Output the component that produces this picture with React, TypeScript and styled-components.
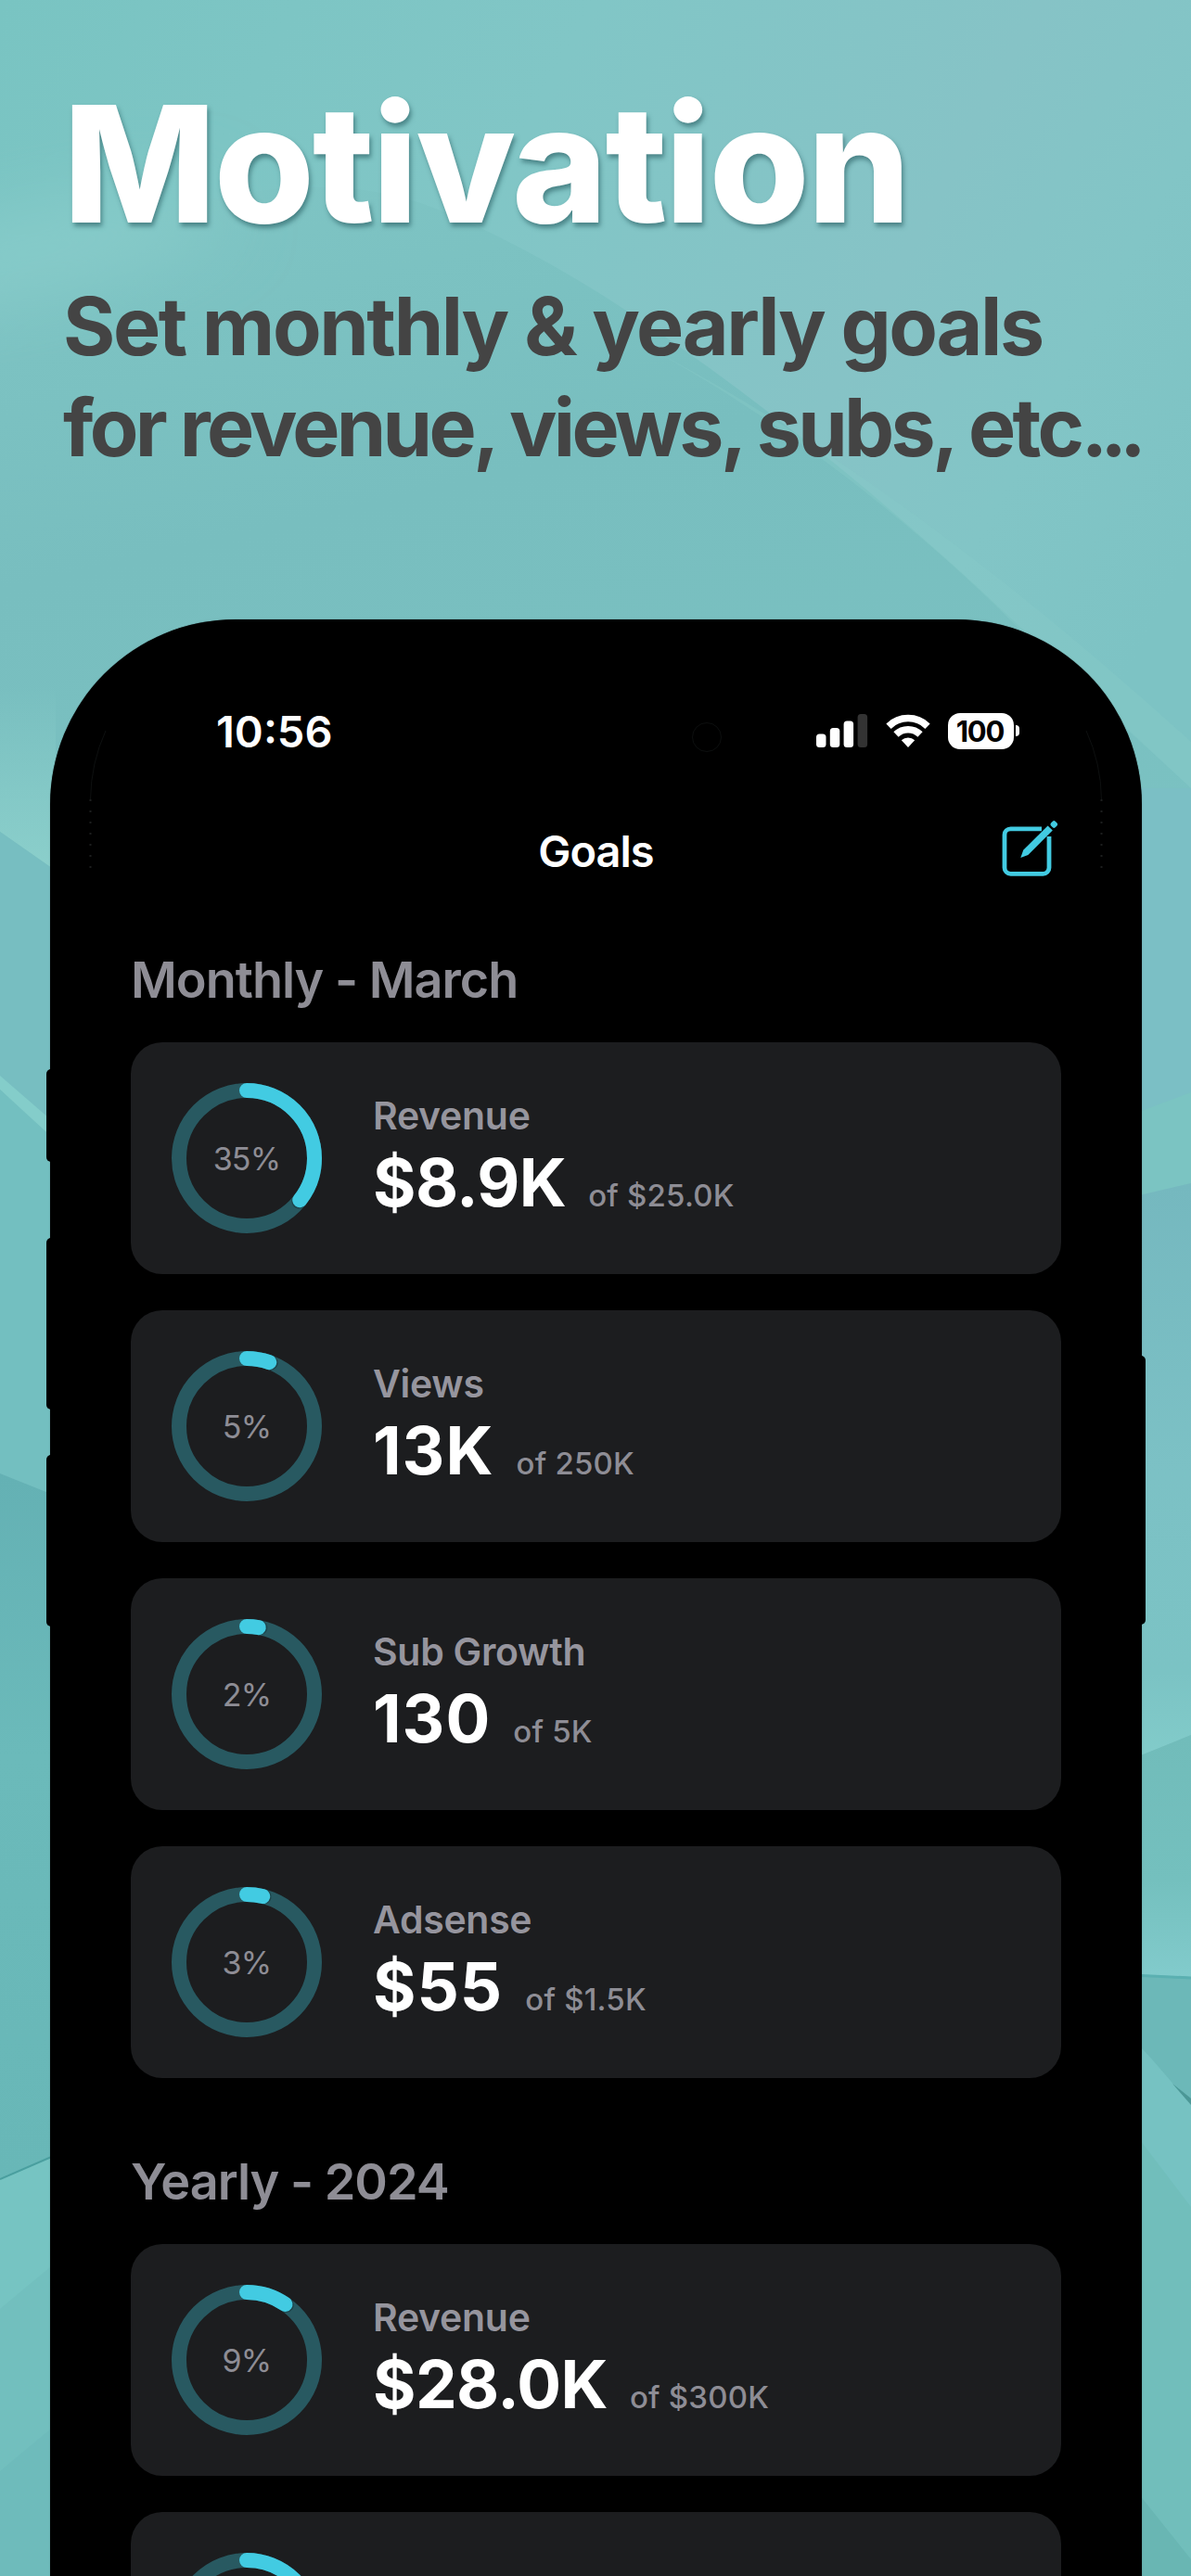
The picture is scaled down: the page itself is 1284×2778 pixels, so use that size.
import * as React from 'react'
import styled, { createGlobalStyle } from 'styled-components'

const accent = '#42cbe2'
const muted = '#8e8d95'

type Goal = {
  label: string
  value: string
  target: string
  percent: string
  ratio: number
}

const monthlyGoals: Goal[] = [
  { label: 'Revenue', value: '$8.9K', target: '$25.0K', percent: '35%', ratio: 0.356 },
  { label: 'Views', value: '13K', target: '250K', percent: '5%', ratio: 0.054 },
  { label: 'Sub Growth', value: '130', target: '5K', percent: '2%', ratio: 0.028 },
  { label: 'Adsense', value: '$55', target: '$1.5K', percent: '3%', ratio: 0.038 },
]

const yearlyGoals: Goal[] = [
  { label: 'Revenue', value: '$28.0K', target: '$300K', percent: '9%', ratio: 0.096 },
  { label: 'Views', value: '', target: '', percent: '', ratio: 0.3 },
]

const GlobalStyle = createGlobalStyle`
  body {
    margin: 0;
    font-family: Inter, 'Liberation Sans', sans-serif;
    -webkit-font-smoothing: antialiased;
  }
`

const Poster = styled.main`
  position: relative;
  display: flex;
  flex-direction: column;
  width: 1284px;
  height: 2778px;
  overflow: hidden;
  background: #7bc1c2;
`

const Backdrop = styled.svg`
  position: absolute;
  inset: 0;
`

const Hero = styled.header`
  position: relative;
  box-sizing: border-box;
  flex: none;
  height: 668px;
  padding: 70px 0 0 68px;
  white-space: nowrap;
`

const Title = styled.h1`
  margin: 0;
  color: #fff;
  font-size: 175px;
  font-weight: 800;
  line-height: 212px;
  letter-spacing: -2.3px;
  text-shadow: 2px 4px 5px rgba(30, 80, 85, 0.55);
`

const Subtitle = styled.p`
  margin: 16px 0 0;
  color: #444;
  font-size: 86px;
  font-weight: 700;
  line-height: 109px;
`

const SubtitleLine = styled.span<{ spacing: number }>`
  display: block;
  letter-spacing: ${({ spacing }) => spacing}px;
`

const Dots = styled.span`
  letter-spacing: -8px;
`

const Phone = styled.section`
  position: relative;
  box-sizing: border-box;
  width: 1177px;
  height: 2400px;
  flex: none;
  margin-left: 54px;
  padding: 0 87px;
  border-radius: 200px 200px 0 0;
  background: #000;
  box-shadow: 0 0 1px rgba(0, 0, 0, 0.6);
`

const SideButton = styled.span<{ side: 'left' | 'right'; top: number; length: number }>`
  position: absolute;
  ${({ side }) => side}: -4px;
  top: ${({ top }) => top}px;
  width: 10px;
  height: ${({ length }) => length}px;
  border-radius: 5px;
  background: #000;
`

const Camera = styled.span`
  position: absolute;
  top: 111px;
  left: 692px;
  width: 32px;
  height: 32px;
  box-sizing: border-box;
  border: 1px solid #0d0f0f;
  border-radius: 50%;
`

const Bezel = styled.svg`
  position: absolute;
  top: 110px;
  left: 0;
`

const StatusBar = styled.div`
  display: flex;
  align-items: center;
  height: 40px;
  padding: 100px 45px 0 92px;
  color: #fff;
`

const Clock = styled.time`
  flex: 1;
  font-size: 47px;
  font-weight: 600;
`

const StatusIcons = styled.div`
  display: flex;
  align-items: center;
  gap: 19px;
`

const Battery = styled.div`
  display: flex;
  align-items: center;
  gap: 2px;
`

const BatteryBody = styled.span`
  width: 71px;
  height: 39px;
  border-radius: 13px;
  background: #fff;
  color: #000;
  font-size: 31px;
  font-weight: 700;
  line-height: 40px;
  text-align: center;
  letter-spacing: -1.2px;
  text-indent: -2px;
`

const BatteryTip = styled.span`
  width: 4px;
  height: 12px;
  border-radius: 0 5px 5px 0;
  background: #fff;
`

const NavBar = styled.div`
  display: grid;
  grid-template-columns: 1fr auto 1fr;
  align-items: center;
  height: 60px;
  margin-top: 79px;
`

const NavTitle = styled.h2`
  grid-column: 2;
  margin: 0;
  color: #fff;
  font-size: 47px;
  font-weight: 600;
  letter-spacing: -1px;
`

const EditButton = styled.button`
  display: flex;
  justify-self: end;
  margin-right: 4px;
  padding: 0;
  border: 0;
  background: none;

  svg {
    overflow: visible;
  }
`

const SectionTitle = styled.h3<{ gap: number }>`
  margin: ${({ gap }) => gap}px 0 34px;
  color: ${muted};
  font-size: 54px;
  font-weight: 600;
  line-height: 66px;
  letter-spacing: -1px;
`

const GoalList = styled.div`
  display: flex;
  flex-direction: column;
  gap: 39px;
`

const Card = styled.article`
  display: flex;
  align-items: center;
  box-sizing: border-box;
  height: 250px;
  padding: 0 44px;
  border-radius: 34px;
  background: #1c1d1f;
`

const RingBox = styled.div`
  display: grid;
  place-items: center;
  width: 162px;
  height: 162px;
  margin-right: 55px;

  > * {
    grid-area: 1 / 1;
  }
`

const Percent = styled.span`
  color: ${muted};
  font-size: 34px;
  letter-spacing: -0.8px;
`

const Details = styled.div`
  display: flex;
  flex-direction: column;
  padding-top: 17px;
`

const Label = styled.span`
  color: #96959e;
  font-size: 41px;
  font-weight: 600;
  line-height: 46px;
  letter-spacing: -0.3px;
`

const Amount = styled.div`
  display: flex;
  align-items: baseline;
  gap: 24px;
  margin-top: 2px;
  line-height: 94px;
`

const Value = styled.strong<{ decimal: boolean }>`
  color: #fff;
  font-size: 71px;
  font-weight: 700;
  letter-spacing: ${({ decimal }) => (decimal ? -0.6 : 1)}px;
`

const Target = styled.span`
  color: ${muted};
  font-size: 33px;
  font-weight: 500;
  letter-spacing: 0.2px;
`

const Waves = () => {
  return (
    <Backdrop width="1284" height="2778" viewBox="0 0 1284 2778" aria-hidden="true">
      <defs>
        <linearGradient id="top" x1="0" y1="0" x2="1" y2="0.5">
          <stop offset="0" stopColor="#79c4c2" />
          <stop offset="0.4" stopColor="#81c6c6" />
          <stop offset="0.7" stopColor="#86c3c6" />
          <stop offset="0.85" stopColor="#82c5c6" />
          <stop offset="1" stopColor="#7dc3c4" />
        </linearGradient>
        <linearGradient id="fold" x1="0" y1="0" x2="0.3" y2="1">
          <stop offset="0" stopColor="#7fc5c4" />
          <stop offset="0.4" stopColor="#78bebf" />
          <stop offset="1" stopColor="#7bc2c2" />
        </linearGradient>
        <linearGradient id="glow" x1="0" y1="0" x2="0" y2="1">
          <stop offset="0" stopColor="#8bcfcb" stopOpacity="0" />
          <stop offset="1" stopColor="#8bcfcb" />
        </linearGradient>
        <linearGradient id="deep" x1="0" y1="0" x2="0" y2="1">
          <stop offset="0" stopColor="#64b1b4" />
          <stop offset="0.4" stopColor="#6bbaba" />
          <stop offset="1" stopColor="#68b7b7" />
        </linearGradient>
        <linearGradient id="rightSide" x1="0" y1="0" x2="0" y2="1">
          <stop offset="0" stopColor="#75b8bf" />
          <stop offset="0.5" stopColor="#7cc1c5" />
          <stop offset="0.85" stopColor="#7bc3c4" />
          <stop offset="1" stopColor="#82ccca" />
        </linearGradient>
        <linearGradient id="rightLow" x1="0" y1="0" x2="0" y2="1">
          <stop offset="0" stopColor="#71bcba" />
          <stop offset="0.6" stopColor="#74c0be" />
          <stop offset="1" stopColor="#82cbcc" />
        </linearGradient>
        <filter id="soft" x="-50%" y="-100%" width="200%" height="300%">
          <feGaussianBlur stdDeviation="40" />
        </filter>
      </defs>

      <rect width="1284" height="1200" fill="url(#top)" />
      <path
        d="M0 300C160 220 330 170 470 225C620 285 760 390 900 500C1030 605 1140 715 1284 850V1200H0Z"
        fill="url(#fold)"
      />
      <ellipse cx="40" cy="270" rx="200" ry="40" fill="#88ccca" filter="url(#soft)" transform="rotate(-12 40 270)" />
      <path d="M640 345C820 430 1000 575 1110 690L1284 850V800C1130 660 900 470 640 345Z" fill="#86cac8" opacity="0.4" />

      <path d="M0 740H60V939L0 897Z" fill="url(#glow)" />
      <path d="M0 897L60 939V1220L0 1162Z" fill="#77bec1" />
      <path d="M0 1160L60 1212V1232L0 1175Z" fill="#84cdca" />
      <path d="M0 1175L60 1230V1613L0 1589Z" fill="#73bfc0" />
      <path d="M0 1589L60 1613V2325L0 2350Z" fill="url(#deep)" />
      <path d="M0 2350L60 2324V2778H0Z" fill="#76c4c2" />
      <path d="M0 2350L60 2324" stroke="#4a9f9f" strokeWidth="2" />
      <path d="M0 2490L60 2440V2778H0Z" fill="#72bfbe" />
      <path d="M0 2665L60 2615V2778H0Z" fill="#6ebbbb" />

      <path d="M1220 850H1284V1180L1220 1202Z" fill="#7bbfc5" />
      <path d="M1220 1202L1284 1178V1276L1220 1291Z" fill="#7bc4c2" />
      <path d="M1220 1291L1284 1276V1871L1220 1897Z" fill="url(#rightSide)" />
      <path d="M1220 1897L1284 1871V2133L1220 2129Z" fill="url(#rightLow)" />
      <path d="M1220 2129L1284 2132V2300H1220Z" fill="#6cb8b8" />
      <path d="M1220 2130L1284 2133" stroke="#5bb0b1" strokeWidth="3" />
      <path d="M1220 2198C1245 2222 1262 2246 1284 2268V2400H1220Z" fill="#76c2c2" />
      <path d="M1264 2247L1284 2263V2270Z" fill="#4b9796" />
      <path d="M1220 2296L1284 2380V2778H1220Z" fill="#71bebb" />
      <path d="M1220 2680L1284 2760V2778H1220Z" fill="#69b6b3" />
    </Backdrop>
  )
}

const BezelHighlight = () => {
  return (
    <Bezel width="1177" height="180" viewBox="0 0 1177 180" fill="none" stroke="#1c1e1e">
      <path d="M60 10Q44 45 43.500 84M1117 10Q1133 45 1133.500 84" stroke="#0e1010" />
      <path d="M43.500 84V168M1133.500 84V168" strokeWidth="2" strokeDasharray="2 10" />
    </Bezel>
  )
}

const SignalIcon = () => {
  return (
    <svg width="56" height="36" viewBox="0 0 56 36" fill="#fff">
      <rect x="0" y="21.5" width="10.5" height="14.5" rx="3.5" />
      <rect x="14.8" y="15" width="10.5" height="21" rx="3.5" />
      <rect x="29.6" y="7.5" width="10.5" height="28.5" rx="3.5" />
      <rect x="44.6" y="0" width="10.5" height="36" rx="3.5" fill="#333" />
    </svg>
  )
}

const WifiIcon = () => {
  return (
    <svg width="48" height="36" viewBox="0 0 48 36" fill="none" stroke="#fff" strokeWidth="7.5">
      <path d="M3 13.2A30 30 0 0 1 45 13.2" />
      <path d="M11 22A18.5 18.5 0 0 1 37 22" />
      <path d="M24 36L16.8 28.3A10.5 10.5 0 0 1 31.2 28.3Z" fill="#fff" stroke="none" />
    </svg>
  )
}

const EditIcon = () => {
  return (
    <svg width="60" height="60" viewBox="0 0 60 60" fill="none" stroke={accent}>
      <path
        d="M43 6.800H9.500A6.500 6.500 0 0 0 3 13.300V48.800A6.500 6.500 0 0 0 9.500 55.300H44.500A6.500 6.500 0 0 0 51 48.800V15"
        strokeWidth="4.8"
      />
      <path d="M49.600 3.400L54.800 8.600L28.400 35L20.300 38L23.200 29.800Z" fill={accent} stroke="none" />
      <rect x="53" y="-1.300" width="6.600" height="6.600" rx="2" fill={accent} stroke="none" transform="rotate(45 56.300 2)" />
    </svg>
  )
}

const Ring = ({ ratio }: { ratio: number }) => {
  const length = 2 * Math.PI * 73
  return (
    <svg width="162" height="162" viewBox="0 0 162 162" fill="none" strokeWidth="16">
      <circle cx="81" cy="81" r="73" stroke="#285961" />
      <g transform="rotate(-90 81 81)" strokeLinecap="round">
        <circle
          cx="81"
          cy="81"
          r="73"
          stroke="#1d454c"
          strokeDasharray={`${length * ratio + 1.5} ${length}`}
        />
        <circle cx="81" cy="81" r="73" stroke={accent} strokeDasharray={`${length * ratio} ${length}`} />
      </g>
    </svg>
  )
}

const GoalCard = ({ goal }: { goal: Goal }) => {
  return (
    <Card>
      <RingBox>
        <Ring ratio={goal.ratio} />
        <Percent>{goal.percent}</Percent>
      </RingBox>
      <Details>
        <Label>{goal.label}</Label>
        <Amount>
          <Value decimal={goal.value.includes('.')}>{goal.value || '\u00a0'}</Value>
          {goal.target && <Target>of {goal.target}</Target>}
        </Amount>
      </Details>
    </Card>
  )
}

const GoalSection = ({ title, goals, gap }: { title: string; goals: Goal[]; gap: number }) => {
  return (
    <>
      <SectionTitle gap={gap}>{title}</SectionTitle>
      <GoalList>
        {goals.map((goal) => (
          <GoalCard key={goal.label} goal={goal} />
        ))}
      </GoalList>
    </>
  )
}

export default function App() {
  return (
    <>
      <GlobalStyle />
      <Poster>
        <Waves />
        <Hero>
          <Title>Motivation</Title>
          <Subtitle>
            <SubtitleLine spacing={-2.4}>Set monthly &amp; yearly goals</SubtitleLine>
            <SubtitleLine spacing={-3.7}>
              for revenue, views, subs, etc<Dots>...</Dots>
            </SubtitleLine>
          </Subtitle>
        </Hero>
        <Phone>
          <SideButton side="left" top={485} length={100} />
          <SideButton side="left" top={667} length={185} />
          <SideButton side="left" top={901} length={185} />
          <SideButton side="right" top={794} length={290} />
          <BezelHighlight />
          <Camera />
          <StatusBar>
            <Clock>10:56</Clock>
            <StatusIcons>
              <SignalIcon />
              <WifiIcon />
              <Battery>
                <BatteryBody>100</BatteryBody>
                <BatteryTip />
              </Battery>
            </StatusIcons>
          </StatusBar>
          <NavBar>
            <NavTitle>Goals</NavTitle>
            <EditButton aria-label="Edit goals">
              <EditIcon />
            </EditButton>
          </NavBar>
          <GoalSection title="Monthly - March" goals={monthlyGoals} gap={77} />
          <GoalSection title="Yearly - 2024" goals={yearlyGoals} gap={79} />
        </Phone>
      </Poster>
    </>
  )
}
